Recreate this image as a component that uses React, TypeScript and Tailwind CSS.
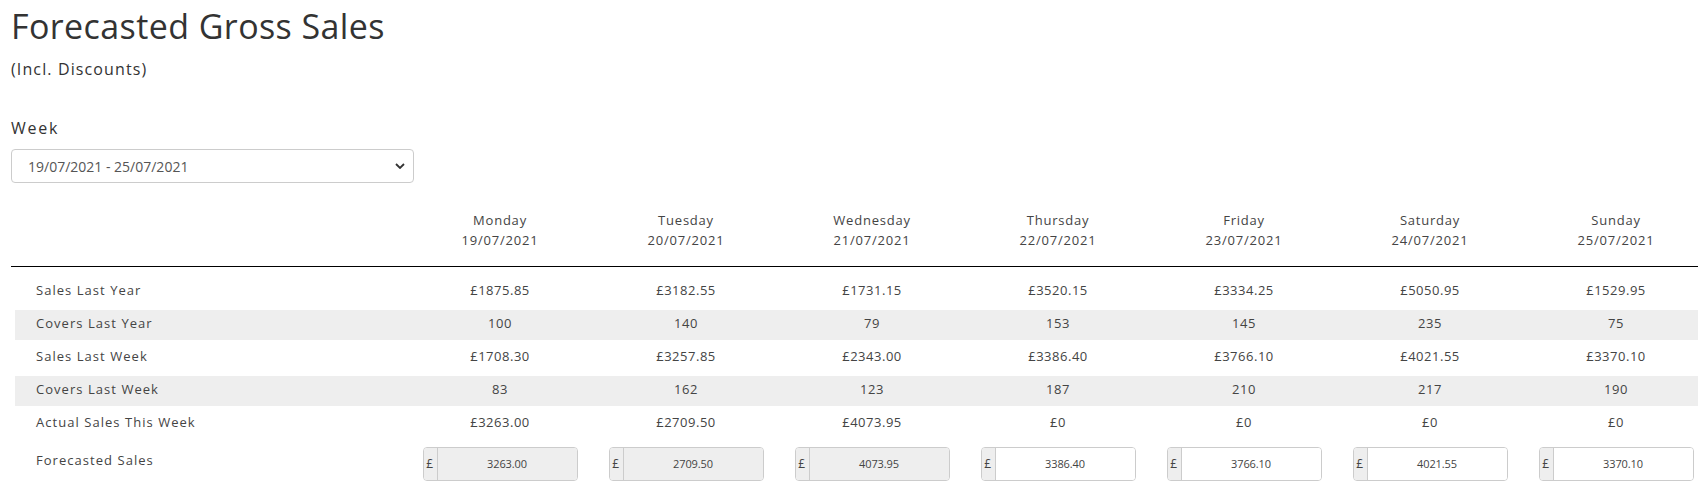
import React from "react";

type Day = {
  name: string;
  date: string;
  salesLastYear: string;
  coversLastYear: string;
  salesLastWeek: string;
  coversLastWeek: string;
  actual: string;
  forecast: string;
  locked: boolean;
};

const days: Day[] = [
  { name: "Monday", date: "19/07/2021", salesLastYear: "£1875.85", coversLastYear: "100", salesLastWeek: "£1708.30", coversLastWeek: "83", actual: "£3263.00", forecast: "3263.00", locked: true },
  { name: "Tuesday", date: "20/07/2021", salesLastYear: "£3182.55", coversLastYear: "140", salesLastWeek: "£3257.85", coversLastWeek: "162", actual: "£2709.50", forecast: "2709.50", locked: true },
  { name: "Wednesday", date: "21/07/2021", salesLastYear: "£1731.15", coversLastYear: "79", salesLastWeek: "£2343.00", coversLastWeek: "123", actual: "£4073.95", forecast: "4073.95", locked: true },
  { name: "Thursday", date: "22/07/2021", salesLastYear: "£3520.15", coversLastYear: "153", salesLastWeek: "£3386.40", coversLastWeek: "187", actual: "£0", forecast: "3386.40", locked: false },
  { name: "Friday", date: "23/07/2021", salesLastYear: "£3334.25", coversLastYear: "145", salesLastWeek: "£3766.10", coversLastWeek: "210", actual: "£0", forecast: "3766.10", locked: false },
  { name: "Saturday", date: "24/07/2021", salesLastYear: "£5050.95", coversLastYear: "235", salesLastWeek: "£4021.55", coversLastWeek: "217", actual: "£0", forecast: "4021.55", locked: false },
  { name: "Sunday", date: "25/07/2021", salesLastYear: "£1529.95", coversLastYear: "75", salesLastWeek: "£3370.10", coversLastWeek: "190", actual: "£0", forecast: "3370.10", locked: false },
];

const rows: { label: string; key: keyof Day; shaded: boolean }[] = [
  { label: "Sales Last Year", key: "salesLastYear", shaded: false },
  { label: "Covers Last Year", key: "coversLastYear", shaded: true },
  { label: "Sales Last Week", key: "salesLastWeek", shaded: false },
  { label: "Covers Last Week", key: "coversLastWeek", shaded: true },
  { label: "Actual Sales This Week", key: "actual", shaded: false },
];

function ForecastInput({ value, locked }: { value: string; locked: boolean }) {
  return (
    <div className="mx-auto flex h-[34px] w-[155px] overflow-hidden rounded-[4px] border border-[#ccc] text-[#444]">
      <div className="flex w-[14px] shrink-0 items-center justify-center border-r border-[#ccc] bg-[#eee] text-[12px]">
        £
      </div>
      <div
        className={
          locked
            ? "flex flex-1 items-center justify-center bg-[#eee] text-[11px] tracking-[-0.01em]"
            : "flex flex-1 items-center justify-center bg-white text-[11px] tracking-[-0.01em]"
        }
      >
        {value}
      </div>
    </div>
  );
}

export default function App() {
  return (
    <div className="w-[1698px] overflow-hidden bg-white font-['Open_Sans',sans-serif] text-[#333]">
      <div className="pl-[11px]">
        <h1 className="mt-[6px] text-[34px] leading-[40px] font-normal tracking-[0.012em]">Forecasted Gross Sales</h1>
        <div className="mt-[11px] text-[16px] leading-[24px] tracking-[0.07em]">(Incl. Discounts)</div>
        <div className="mt-[35px] text-[16px] leading-[24px] tracking-[0.11em]">Week</div>
        <div className="mt-[9px] flex h-[34px] w-[403px] items-center justify-between rounded-[4px] border border-[#ccc] pr-[8px] pl-[16px] text-[14px] text-[#555]">
          <span>19/07/2021 - 25/07/2021</span>
          <svg width="10" height="6" viewBox="0 0 10 6" fill="none">
            <path d="M1 1l4 4 4-4" stroke="#333" strokeWidth="1.8" />
          </svg>
        </div>

        <div className="mt-[27px] grid w-[1720px] grid-cols-[396px_repeat(7,186px)] border-b border-black pb-[16px] text-[13px] leading-[20px] tracking-[0.06em] text-[#444]">
          <div />
          {days.map((d) => (
            <div key={d.name} className="text-center">
              <div>{d.name}</div>
              <div>{d.date}</div>
            </div>
          ))}
        </div>

        <div className="mt-[10px] ml-[4px] flex flex-col gap-[3px] text-[13px] leading-[20px] tracking-[0.04em] text-[#444]">
          {rows.map((r) => (
            <div
              key={r.label}
              className={
                r.shaded
                  ? "grid h-[30px] w-[1720px] grid-cols-[392px_repeat(7,186px)] bg-[#eee] pt-[3px]"
                  : "grid h-[30px] w-[1720px] grid-cols-[392px_repeat(7,186px)] pt-[3px]"
              }
            >
              <div className="pl-[21px] tracking-[0.08em]">{r.label}</div>
              {days.map((d) => (
                <div key={d.name} className="text-center">
                  {d[r.key] as string}
                </div>
              ))}
            </div>
          ))}
          <div className="grid h-[44px] w-[1720px] grid-cols-[392px_repeat(7,186px)]">
            <div className="pt-[8px] pl-[21px] tracking-[0.08em]">Forecasted Sales</div>
            {days.map((d) => (
              <div key={d.name} className="pt-[5px]">
                <ForecastInput value={d.forecast} locked={d.locked} />
              </div>
            ))}
          </div>
        </div>
      </div>
    </div>
  );
}
